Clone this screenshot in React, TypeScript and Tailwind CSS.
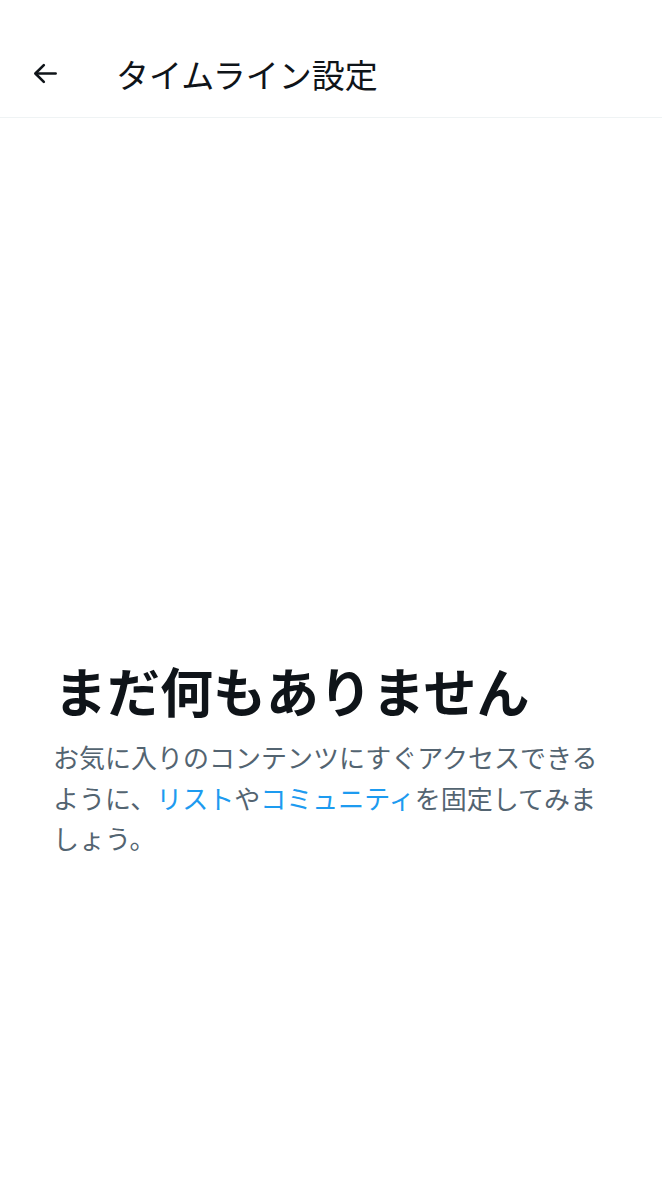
import React from "react";

export default function App() {
  return (
    <div
      className="w-[662px] h-[1200px] bg-white flex flex-col"
      style={{ fontFamily: '"Noto Sans CJK JP", "Noto Sans", sans-serif' }}
    >
      <header className="pt-[30px] h-[118px] flex items-center border-b border-[#eff3f4] shrink-0">
        <div className="w-[116px] pl-[32px] flex items-center">
          <svg width="27" height="27" viewBox="0 0 24 24" fill="none" stroke="#0f1419" strokeWidth="2.3" strokeLinecap="round" strokeLinejoin="round">
            <path d="M21 12H3.5" />
            <path d="M10.5 4.5L3 12l7.5 7.5" />
          </svg>
        </div>
        <h1 className="text-[33px] leading-[40px] font-normal text-[#0f1419]">タイムライン設定</h1>
      </header>
      <main className="px-[53px] pt-[540px]">
        <h2 className="text-[53px] leading-[64px] font-bold text-[#0f1419] pl-[1px]">まだ何もありません</h2>
        <p className="mt-[15px] text-[26px] leading-[40.5px] text-[#536471]">
          お気に入りのコンテンツにすぐアクセスできるように、
          <span className="text-[#1d9bf0]">リスト</span>や
          <span className="text-[#1d9bf0]">コミュニティ</span>を固定してみましょう。
        </p>
      </main>
    </div>
  );
}
